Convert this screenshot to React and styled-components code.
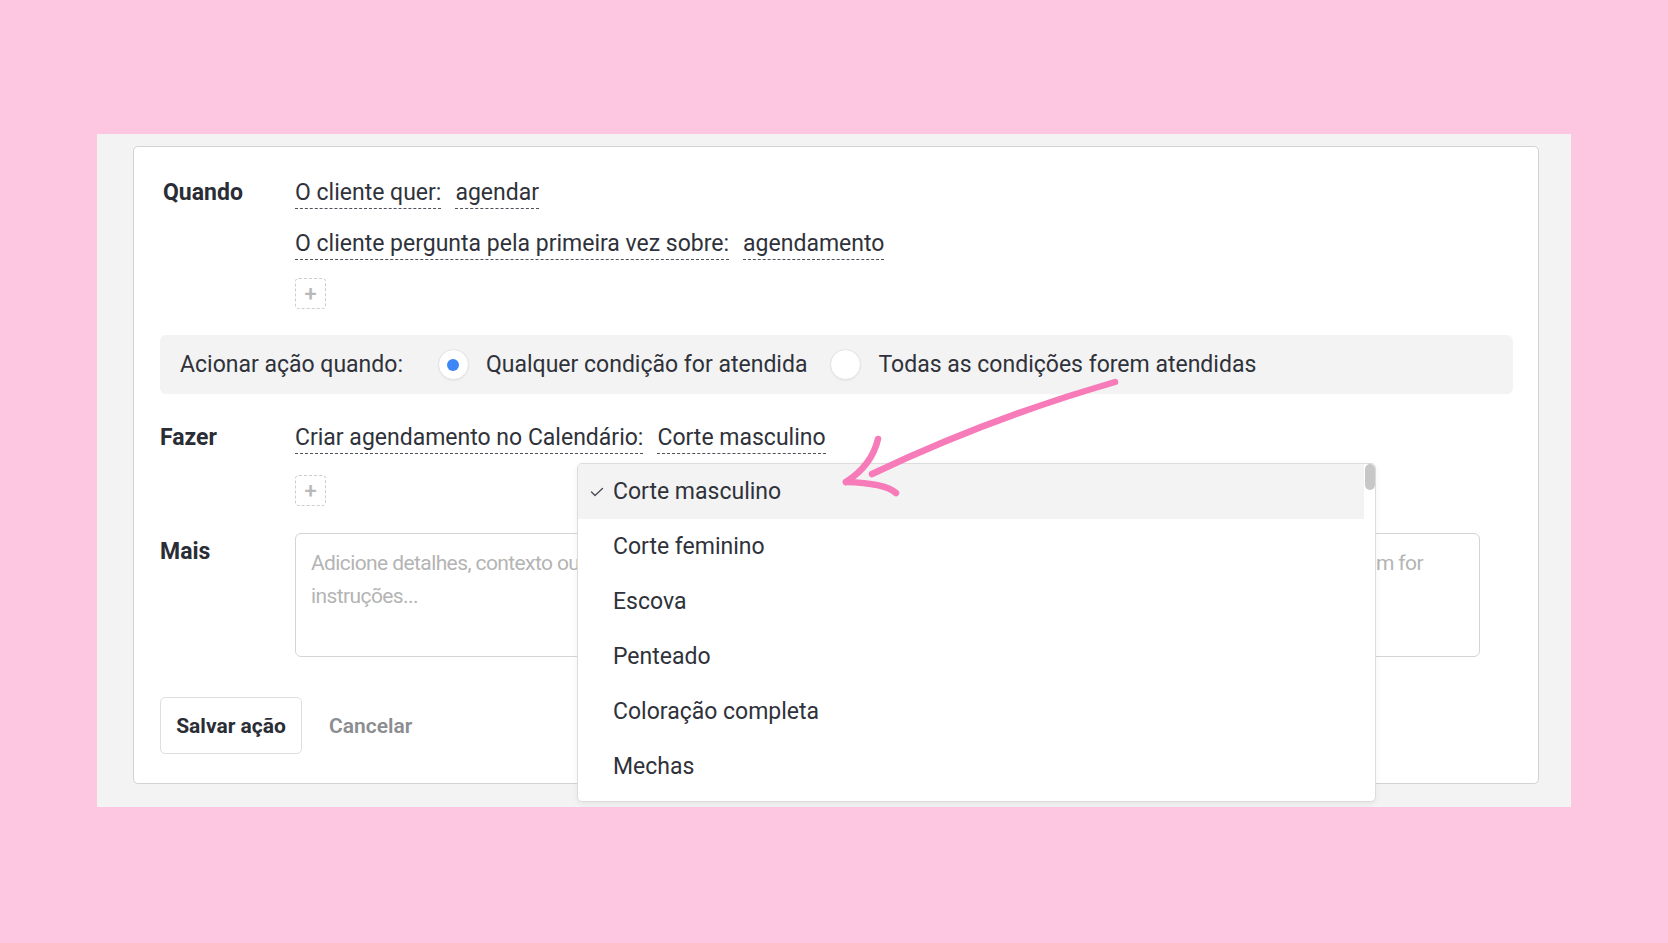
import React from 'react';
import styled, { createGlobalStyle } from 'styled-components';

const GlobalStyle = createGlobalStyle`
  body {
    margin: 0;
    background: #fdc6e1;
    font-family: Roboto, "Noto Sans", sans-serif;
    color: #2f323a;
  }
`;

const conditions = [
  { field: 'O cliente quer:', value: 'agendar' },
  { field: 'O cliente pergunta pela primeira vez sobre:', value: 'agendamento' },
];

const services = ['Corte masculino', 'Corte feminino', 'Escova', 'Penteado', 'Coloração completa', 'Mechas'];

const notesPlaceholder =
  'Adicione detalhes, contexto ou regras para esta ação, por exemplo o que perguntar ao cliente ou o que fazer quando alguém for\ninstruções...';

const App = () => {
  return (
    <Page>
      <GlobalStyle />
      <Frame>
        <Card>
          <Section>
            <Label $indent={3}>Quando</Label>
            <Stack>
              {conditions.map((c) => (
                <Line key={c.field}>
                  <Dashed>{c.field}</Dashed>
                  <Dashed>{c.value}</Dashed>
                </Line>
              ))}
              <AddBox $shift={-2}>+</AddBox>
            </Stack>
          </Section>

          <TriggerBar>
            <TriggerText>Acionar ação quando:</TriggerText>
            <Option>
              <Radio $checked />
              <span>Qualquer condição for atendida</span>
            </Option>
            <Option>
              <Radio />
              <span>Todas as condições forem atendidas</span>
            </Option>
          </TriggerBar>

          <Section>
            <Label>Fazer</Label>
            <Stack $gap={21}>
              <Line>
                <Dashed>Criar agendamento no Calendário:</Dashed>
                <Dashed>Corte masculino</Dashed>
              </Line>
              <AddBox>+</AddBox>
            </Stack>
          </Section>

          <Section $top={27}>
            <Label $offset={4}>Mais</Label>
            <Notes placeholder={notesPlaceholder} />
          </Section>

          <Actions>
            <SaveButton>Salvar ação</SaveButton>
            <CancelButton>Cancelar</CancelButton>
          </Actions>

          <Menu>
            <MenuList>
              {services.map((s, i) => (
                <MenuItem key={s} $selected={i === 0}>
                  <CheckSlot>
                    {i === 0 && (
                      <svg width="14" height="10" viewBox="0 0 14 10">
                        <polyline points="1.5,5 5,8.5 12.5,1.5" fill="none" stroke="#4a4d55" strokeWidth="1.4" strokeLinecap="round" strokeLinejoin="round" />
                      </svg>
                    )}
                  </CheckSlot>
                  {s}
                </MenuItem>
              ))}
            </MenuList>
            <ScrollTrack>
              <ScrollThumb />
            </ScrollTrack>
          </Menu>
        </Card>
      </Frame>

      <Pointer width="1668" height="943" viewBox="0 0 1668 943">
        <g fill="none" stroke="#f77bb8" strokeWidth="6.5" strokeLinecap="round" strokeLinejoin="round">
          <path d="M1115 382 Q990 418 872 474" />
          <path d="M878 439 Q872 465 846 482" />
          <path d="M846 482 Q885 483 896 493" />
        </g>
      </Pointer>
    </Page>
  );
};

const Page = styled.div`
  position: relative;
  width: 1668px;
  height: 943px;
  padding: 134px 0 0 97px;
  box-sizing: border-box;
  overflow: hidden;
`;

const Frame = styled.div`
  width: 1474px;
  height: 673px;
  box-sizing: border-box;
  padding: 12px 32px 23px 36px;
  background: #f3f3f3;
`;

const Card = styled.div`
  position: relative;
  height: 100%;
  box-sizing: border-box;
  padding: 31px 25px 30px 26px;
  background: #ffffff;
  border: 1.5px solid #d2d2d2;
  border-radius: 5px;
`;

const Section = styled.div`
  display: grid;
  grid-template-columns: 135px 1fr;
  align-items: start;
  margin-top: ${(p) => p.$top || 0}px;
`;

const Label = styled.div`
  font-size: 23px;
  font-weight: 700;
  line-height: 30px;
  color: #2a2d35;
  padding-left: ${(p) => p.$indent || 0}px;
  margin-top: ${(p) => p.$offset || 0}px;
`;

const Stack = styled.div`
  display: flex;
  flex-direction: column;
  align-items: flex-start;
  gap: ${(p) => p.$gap || 20}px;
`;

const Line = styled.div`
  display: flex;
  gap: 14px;
`;

const Dashed = styled.span`
  display: inline-block;
  font-size: 23px;
  line-height: 30px;
  border-bottom: 1.5px dashed #4f525a;
`;

const AddBox = styled.div`
  width: 31px;
  height: 31px;
  margin-top: ${(p) => p.$shift || 0}px;
  box-sizing: border-box;
  border: 1.5px dashed #cdcdcd;
  border-radius: 4px;
  display: flex;
  align-items: center;
  justify-content: center;
  font-size: 22px;
  font-weight: 500;
  color: #b8b8b8;
  line-height: 1;
`;

const TriggerBar = styled.div`
  display: flex;
  align-items: center;
  height: 59px;
  margin: 26px 0 29px;
  padding: 0 20px;
  border-radius: 6px;
  background: #f3f3f3;
  font-size: 23px;
`;

const TriggerText = styled.span`
  margin-right: 35px;
`;

const Option = styled.label`
  display: flex;
  align-items: center;
  gap: 17px;
  margin-right: 23px;
`;

const Radio = styled.span`
  position: relative;
  width: 31px;
  height: 31px;
  box-sizing: border-box;
  border-radius: 50%;
  background: #ffffff;
  border: 1px solid #e3e3e3;
  box-shadow: 0 1px 2px rgba(0, 0, 0, 0.05);

  &::after {
    content: '';
    display: ${(p) => (p.$checked ? 'block' : 'none')};
    position: absolute;
    left: 50%;
    top: 50%;
    width: 12px;
    height: 12px;
    margin: -6px 0 0 -6px;
    border-radius: 50%;
    background: #3d86f5;
  }
`;

const Notes = styled.textarea`
  width: 1185px;
  height: 124px;
  box-sizing: border-box;
  padding: 13px 15px;
  border: 1.5px solid #d4d4d4;
  border-radius: 6px;
  resize: none;
  font-family: Roboto, sans-serif;
  font-size: 21px;
  letter-spacing: -0.6px;
  line-height: 33px;
  color: #2f323a;
  background: #fff;

  &::placeholder {
    color: #b4b4b4;
  }
`;

const Actions = styled.div`
  display: flex;
  align-items: center;
  gap: 27px;
  margin-top: 40px;
`;

const SaveButton = styled.button`
  height: 57px;
  width: 142px;
  border: 1.5px solid #dedede;
  border-radius: 5px;
  background: #fff;
  font-family: Roboto, sans-serif;
  font-size: 21px;
  font-weight: 700;
  color: #2a2d35;
`;

const CancelButton = styled.button`
  border: none;
  background: none;
  padding: 0;
  font-family: Roboto, sans-serif;
  font-size: 21px;
  font-weight: 600;
  color: #8b8d91;
`;

const Menu = styled.div`
  position: absolute;
  left: 443px;
  top: 316px;
  width: 799px;
  height: 339px;
  box-sizing: border-box;
  display: flex;
  background: #ffffff;
  border: 1px solid #dcdcdc;
  border-radius: 5px;
  box-shadow: 0 2px 6px rgba(0, 0, 0, 0.06);
  overflow: hidden;
`;

const MenuList = styled.div`
  flex: 1;
  display: flex;
  flex-direction: column;
`;

const MenuItem = styled.div`
  display: flex;
  align-items: center;
  height: 55px;
  padding-left: 12px;
  font-size: 23px;
  color: #2f323a;
  background: ${(p) => (p.$selected ? '#f3f3f3' : '#ffffff')};
`;

const CheckSlot = styled.span`
  display: flex;
  align-items: center;
  width: 23px;
`;

const ScrollTrack = styled.div`
  width: 11px;
  display: flex;
  justify-content: center;
`;

const ScrollThumb = styled.div`
  width: 10px;
  height: 26px;
  border-radius: 5px;
  background: #c7c7c7;
`;

const Pointer = styled.svg`
  position: absolute;
  left: 0;
  top: 0;
  pointer-events: none;
`;

export default App;
